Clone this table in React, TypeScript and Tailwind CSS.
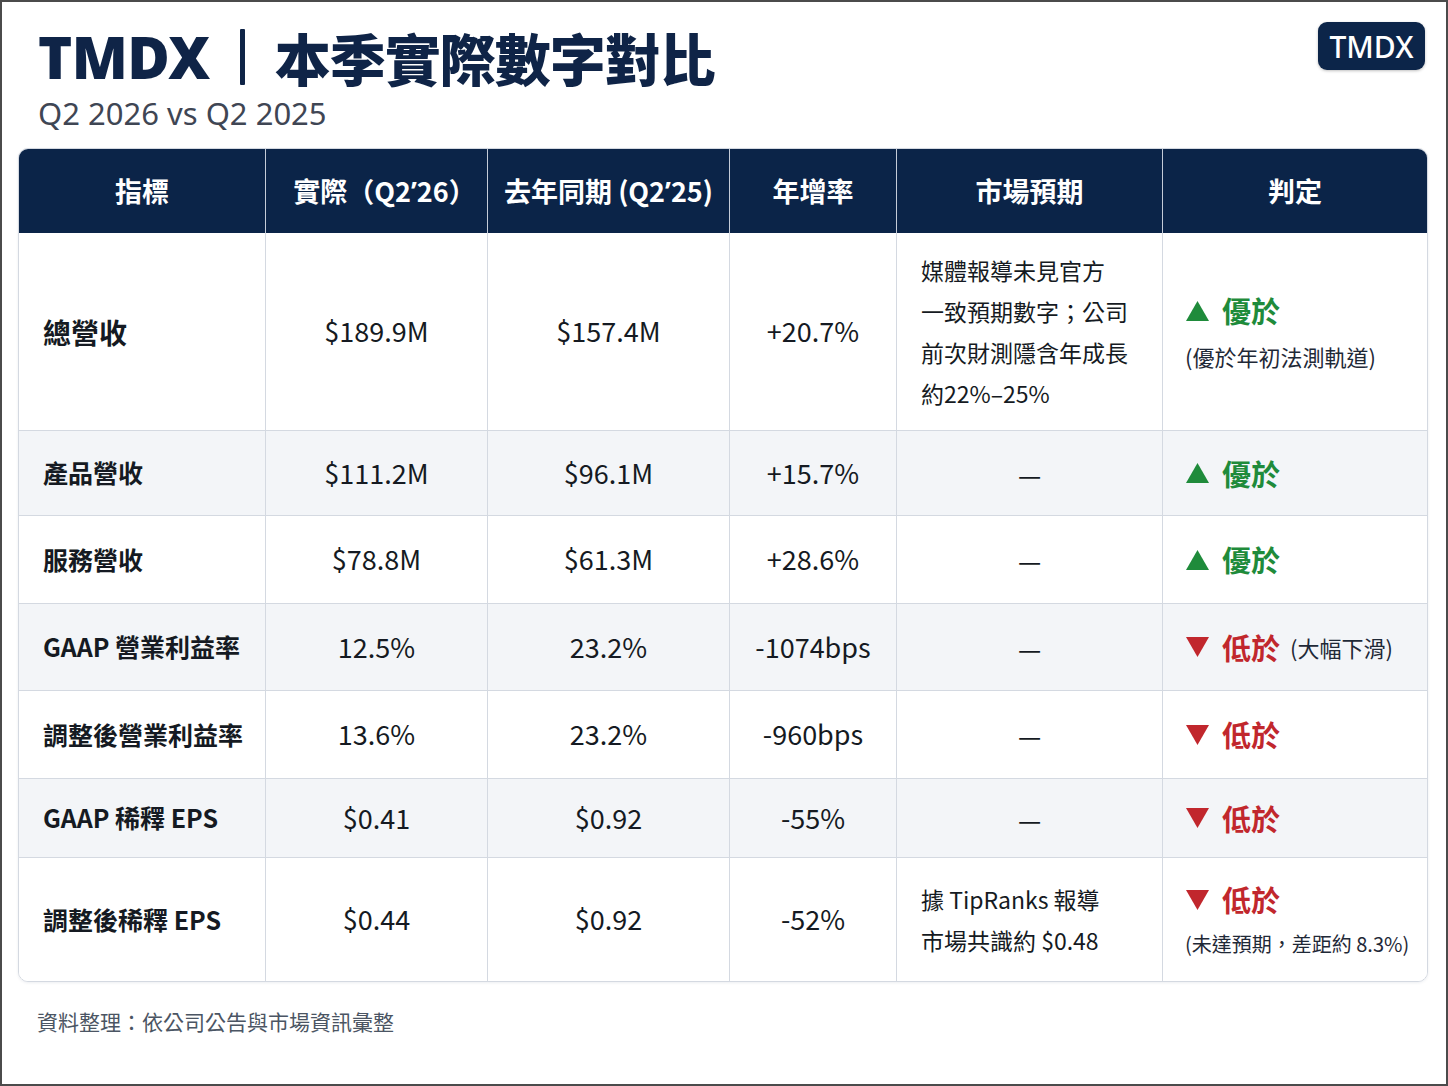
import React from "react";

type Verdict = { up: boolean; label: string; note?: string; inline?: boolean; small?: boolean };
type Row = {
  name: string;
  actual: string;
  prior: string;
  yoy: string;
  market: string[];
  verdict: Verdict;
  h: string;
  shade: boolean;
  big?: boolean;
};

const rows: Row[] = [
  {
    name: "總營收",
    actual: "$189.9M",
    prior: "$157.4M",
    yoy: "+20.7%",
    market: ["媒體報導未見官方", "一致預期數字；公司", "前次財測隱含年成長", "約22%–25%"],
    verdict: { up: true, label: "優於", note: "(優於年初法測軌道)" },
    h: "h-[198px]",
    shade: false,
    big: true,
  },
  { name: "產品營收", actual: "$111.2M", prior: "$96.1M", yoy: "+15.7%", market: [], verdict: { up: true, label: "優於" }, h: "h-[85px]", shade: true },
  { name: "服務營收", actual: "$78.8M", prior: "$61.3M", yoy: "+28.6%", market: [], verdict: { up: true, label: "優於" }, h: "h-[88px]", shade: false },
  {
    name: "GAAP 營業利益率",
    actual: "12.5%",
    prior: "23.2%",
    yoy: "-1074bps",
    market: [],
    verdict: { up: false, label: "低於", note: "(大幅下滑)", inline: true },
    h: "h-[87px]",
    shade: true,
  },
  { name: "調整後營業利益率", actual: "13.6%", prior: "23.2%", yoy: "-960bps", market: [], verdict: { up: false, label: "低於" }, h: "h-[88px]", shade: false },
  { name: "GAAP 稀釋 EPS", actual: "$0.41", prior: "$0.92", yoy: "-55%", market: [], verdict: { up: false, label: "低於" }, h: "h-[79px]", shade: true },
  {
    name: "調整後稀釋 EPS",
    actual: "$0.44",
    prior: "$0.92",
    yoy: "-52%",
    market: ["據 TipRanks 報導", "市場共識約 $0.48"],
    verdict: { up: false, label: "低於", note: "(未達預期，差距約 8.3%)", small: true },
    h: "h-[123px]",
    shade: false,
  },
];

const latin = { fontFamily: '"Noto Sans", sans-serif' };

// header labels; the apostrophe is set in the latin face so it stays narrow
const heads: { node: React.ReactNode; cls?: string }[] = [
  { node: "指標" },
  {
    node: (
      <>
        實際（Q2<span style={latin}>’</span>26）
      </>
    ),
    cls: "pl-[16px]",
  },
  {
    node: (
      <>
        去年同期 (Q2<span style={latin}>’</span>25)
      </>
    ),
  },
  { node: "年增率" },
  { node: "市場預期" },
  { node: "判定" },
];

const cols = "grid grid-cols-[247px_222px_242px_167px_266px_1fr]";
const cjk = { fontFamily: '"Noto Sans CJK TC", "Noto Sans", sans-serif' };

const Arrow = ({ up }: { up: boolean }) =>
  up ? (
    <svg width="25" height="22" viewBox="0 0 25 22" className="shrink-0">
      <polygon points="12.5,1 24,21 1,21" fill="#1f8b3b" />
    </svg>
  ) : (
    <svg width="25" height="22" viewBox="0 0 25 22" className="shrink-0">
      <polygon points="1,1 24,1 12.5,21" fill="#c1272d" />
    </svg>
  );

const VerdictCell = ({ v }: { v: Verdict }) => {
  const color = v.up ? "text-[#1f8b3b]" : "text-[#c1272d]";
  return (
    <div className="flex flex-col justify-center pl-[22px]">
      <div className="flex items-center">
        <Arrow up={v.up} />
        <span className={`ml-[12px] text-[29px] font-bold leading-none ${color}`}>{v.label}</span>
        {v.inline && v.note && <span className="ml-[10px] text-[22px] text-[#1f2937]">{v.note}</span>}
      </div>
      {!v.inline && v.note && (
        <div className={`mt-[20px] whitespace-nowrap leading-none text-[#1f2937] ${v.small ? "text-[20px]" : "text-[22px]"}`}>
          {v.note}
        </div>
      )}
    </div>
  );
};

export default function App() {
  return (
    <div className="w-[1448px] h-[1086px] border-2 border-[#4b4b4b] bg-white px-[16px] overflow-hidden" style={cjk}>
      <div className="flex items-start justify-between pl-[20px] pr-[5px]">
        <div>
          <h1
            className="mt-[20px] flex items-center text-[56px] font-black leading-[70px] text-[#0f2447]"
            style={{ fontFamily: '"Noto Sans", "Noto Sans CJK TC", sans-serif' }}
          >
            <span className="text-[58px] tracking-[-0.5px]">TMDX</span>
            <span className="mx-[30px] h-[56px] w-[5px] rounded-[1px] bg-[#0f2447]" />
            <span className="tracking-[-1px]" style={cjk}>本季實際數字對比</span>
          </h1>
          <p className="mt-[2px] text-[31px] leading-[38px] text-[#3f4654]" style={latin}>
            Q2 2026 vs Q2 2025
          </p>
        </div>
        <div
          className="mt-[20px] flex h-[48px] w-[107px] items-center justify-center rounded-[9px] bg-[#0c2549] text-[30px] font-medium text-white shadow-[0_1px_3px_rgba(0,0,0,0.25)]"
          style={latin}
        >
          TMDX
        </div>
      </div>

      <div className="mt-[16px] w-[1410px] overflow-hidden rounded-[10px] border border-[#d4d9e1] shadow-[0_1px_3px_rgba(15,36,71,0.08)]">
        <div className={`${cols} h-[84px] bg-[#0b2448]`}>
          {heads.map((h, i) => (
            <div
              key={i}
              className={`flex items-center justify-center whitespace-nowrap border-r border-[#c5ccd8] text-[27px] font-bold text-white last:border-r-0 ${h.cls ?? ""}`}
            >
              {h.node}
            </div>
          ))}
        </div>
        {rows.map((r, i) => (
          <div
            key={r.name}
            className={`${cols} ${r.h} ${r.shade ? "bg-[#f3f5f8]" : "bg-white"} ${i < rows.length - 1 ? "border-b border-[#d4d9e1]" : ""} text-[#151a22]`}
          >
            <div className={`flex items-center border-r border-[#d4d9e1] pl-[24px] font-bold ${r.big ? "text-[28px]" : "text-[25px]"}`}>
              {r.name}
            </div>
            <div className="flex items-center justify-center border-r border-[#d4d9e1] text-[27px]">{r.actual}</div>
            <div className="flex items-center justify-center border-r border-[#d4d9e1] text-[27px]">{r.prior}</div>
            <div className="flex items-center justify-center border-r border-[#d4d9e1] text-[27px]">{r.yoy}</div>
            {r.market.length ? (
              <div className="flex flex-col justify-center border-r border-[#d4d9e1] pl-[24px] text-[23px] leading-[41px]">
                {r.market.map((m) => (
                  <div key={m}>{m}</div>
                ))}
              </div>
            ) : (
              <div className="flex items-center justify-center border-r border-[#d4d9e1] text-[26px]">—</div>
            )}
            <VerdictCell v={r.verdict} />
          </div>
        ))}
      </div>

      <p className="mt-[24px] pl-[19px] text-[21px] text-[#4b5563]">資料整理：依公司公告與市場資訊彙整</p>
    </div>
  );
}
